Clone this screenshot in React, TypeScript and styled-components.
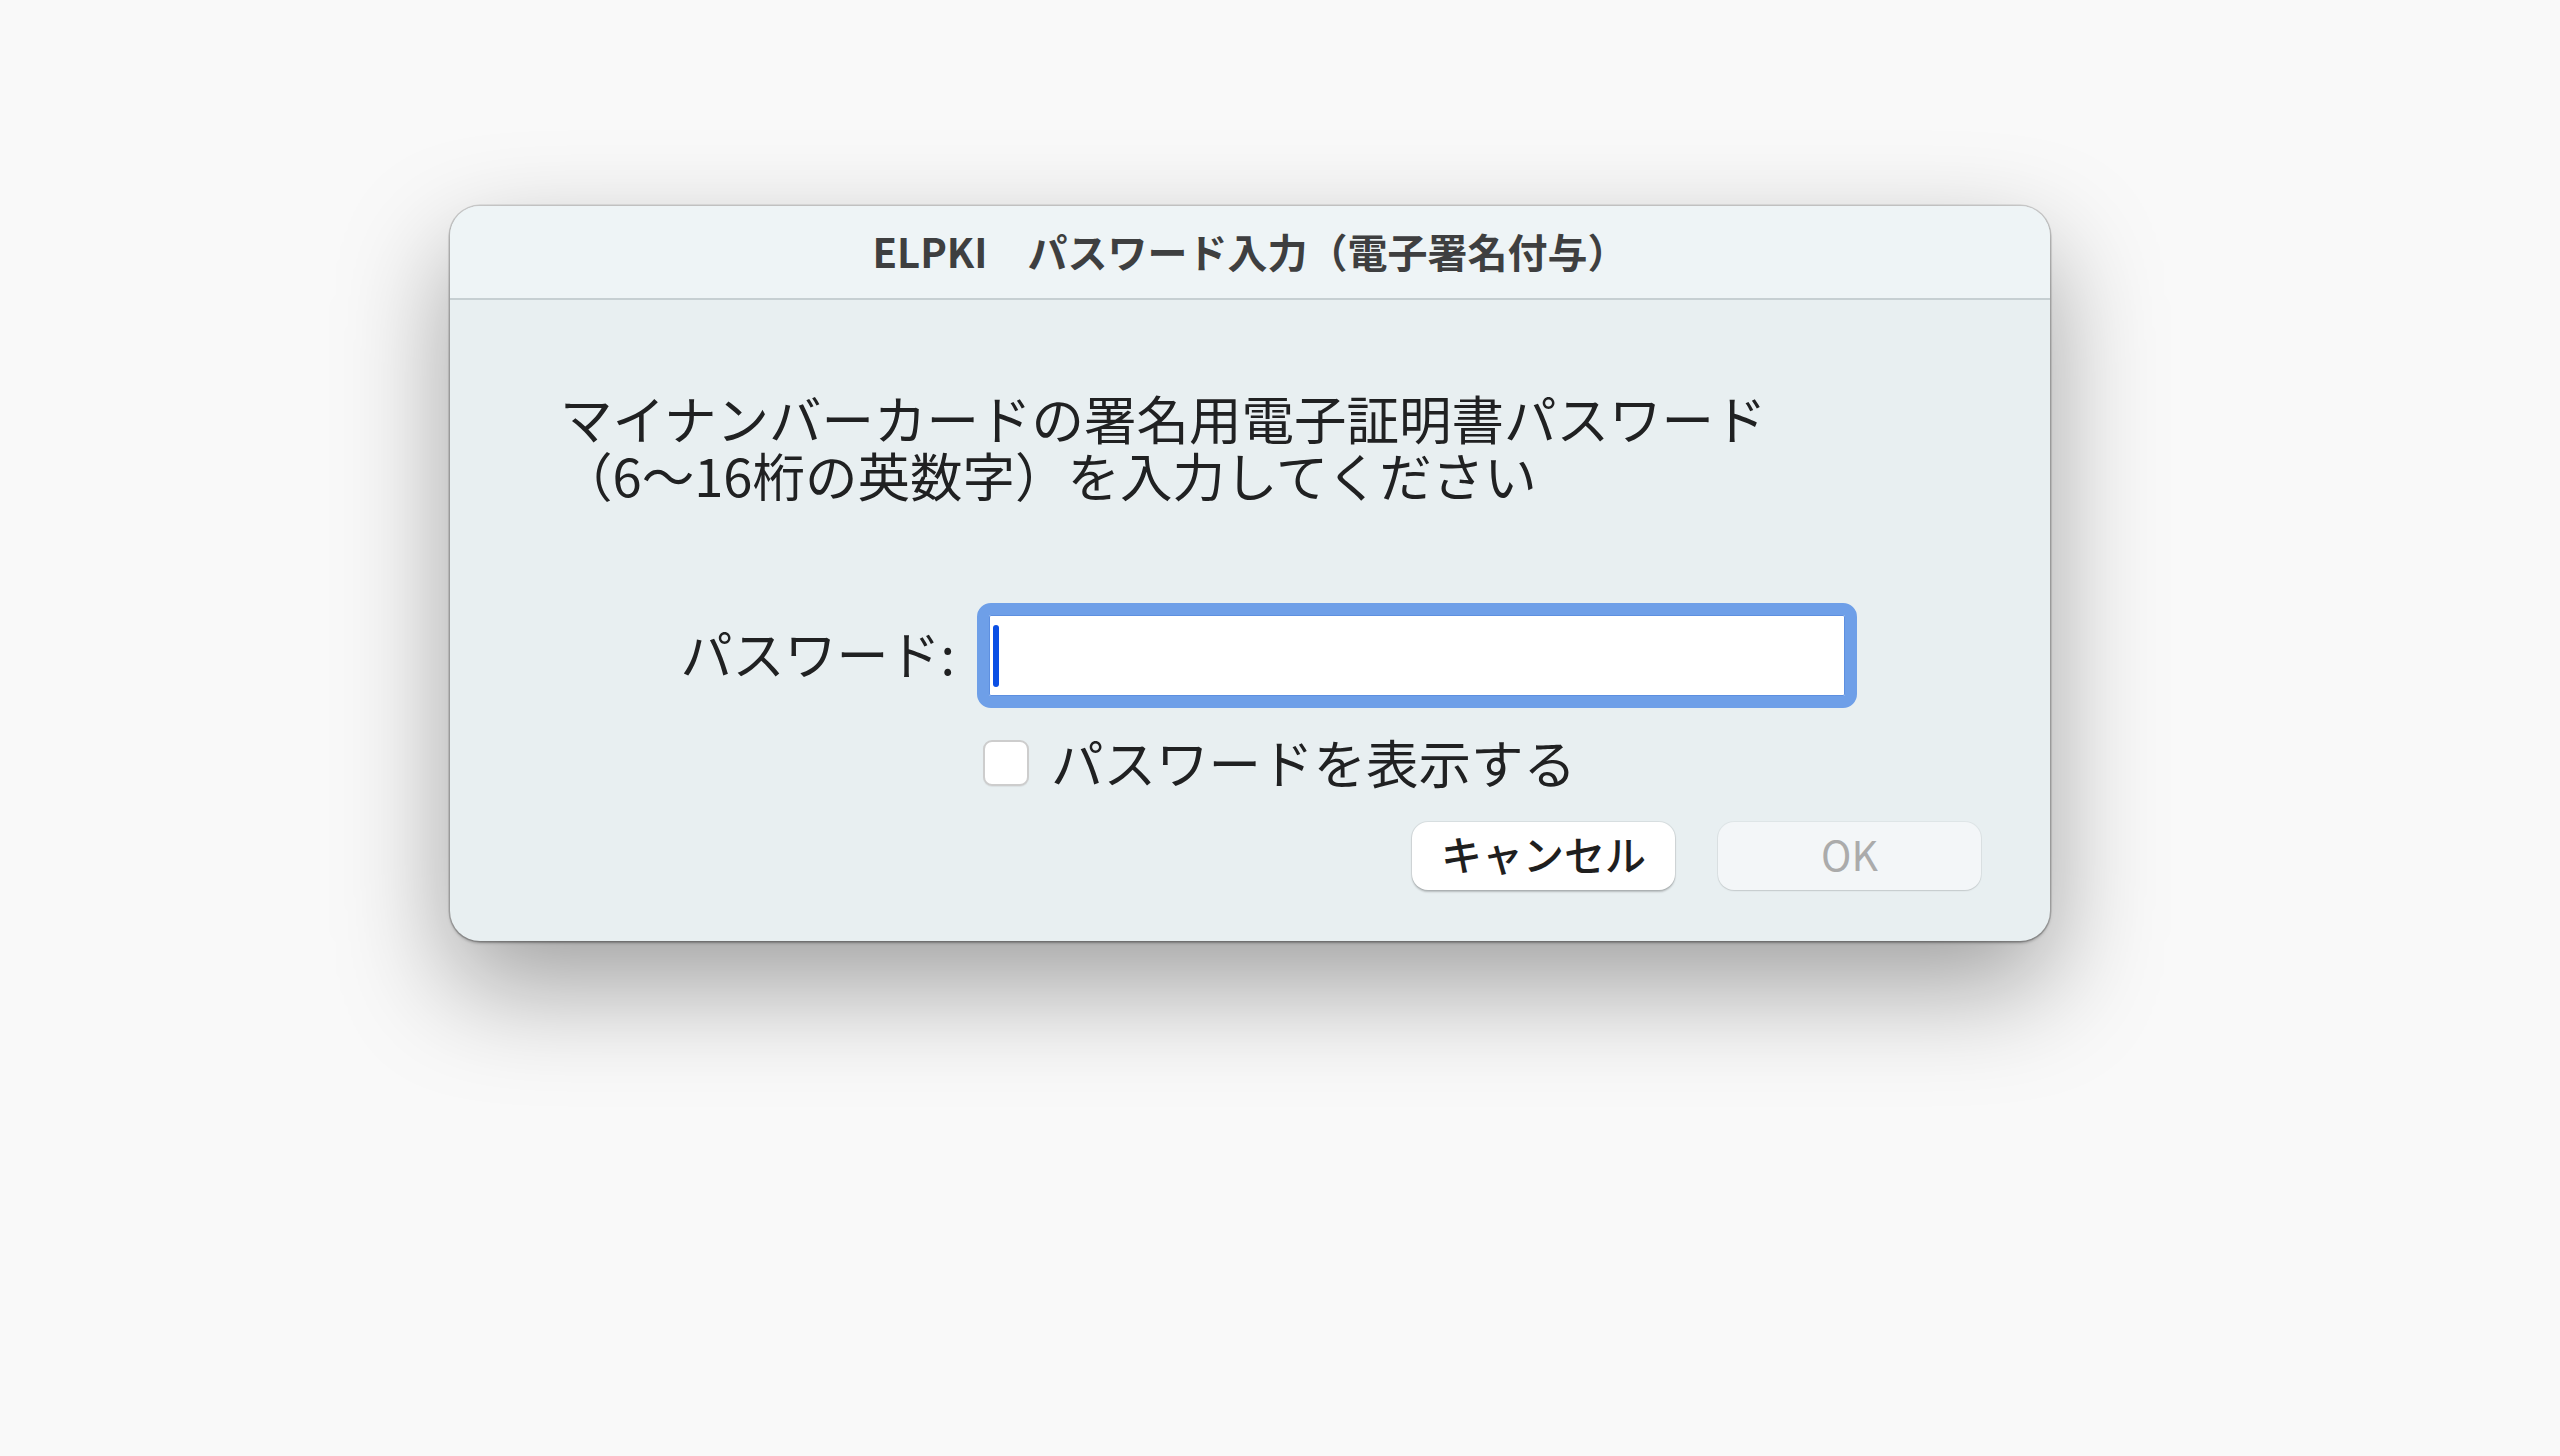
import React from "react";
import styled, { createGlobalStyle } from "styled-components";

const GlobalStyle = createGlobalStyle`
  html, body {
    margin: 0;
    padding: 0;
    background: #f9f9f9;
  }
  body {
    font-family: "Noto Sans CJK JP", "Noto Sans", sans-serif;
    -webkit-font-smoothing: antialiased;
  }
  * { box-sizing: border-box; }
`;

const Page = styled.div`
  width: 2560px;
  height: 1456px;
  padding: 206px 0 0 450px;
  overflow: hidden;
`;

const Dialog = styled.div`
  width: 1600px;
  height: 735px;
  border-radius: 30px;
  overflow: hidden;
  background: #e8eff1;
  display: flex;
  flex-direction: column;
  box-shadow:
    0 0 0 1.5px rgba(0, 0, 0, 0.16),
    0 2px 3px rgba(0, 0, 0, 0.28),
    0 45px 110px rgba(0, 0, 0, 0.36);
`;

const TitleBar = styled.div`
  height: 94px;
  flex: none;
  background: #eef4f6;
  border-bottom: 2px solid #c6cfd2;
  display: flex;
  align-items: center;
  justify-content: center;
  padding-bottom: 2px;
  font-size: 40px;
  font-weight: 700;
  color: #3e3f40;
`;

const Body = styled.div`
  flex: 1;
  display: flex;
  flex-direction: column;
  padding: 89px 69px 50px 0;
`;

const Message = styled.p`
  margin: 0 0 0 110px;
  font-size: 52.5px;
  line-height: 57px;
  color: #202122;
  white-space: nowrap;
`;

const FormGrid = styled.div`
  margin-top: 100px;
  display: grid;
  grid-template-columns: 527px 880px;
  align-items: center;
`;

const Label = styled.label`
  justify-self: end;
  padding-right: 22px;
  padding-bottom: 6px;
  font-size: 52px;
  line-height: 60px;
  color: #202122;
  white-space: nowrap;
`;

const Field = styled.div`
  height: 105px;
  border: 12px solid #6e9fe8;
  border-radius: 14px;
  background: #ffffff;
  display: flex;
  align-items: center;
  padding-left: 4px;
  box-shadow: inset 0 0 0 1px #5d8fe0;
`;

const Caret = styled.span`
  display: block;
  width: 6px;
  height: 62px;
  border-radius: 3px;
  background: #0b4fe4;
`;

const CheckRow = styled.div`
  grid-column: 2;
  margin-top: 32px;
  padding-left: 6px;
  display: flex;
  align-items: center;
  gap: 22px;
  height: 46px;
`;

const Checkbox = styled.span`
  width: 46px;
  height: 46px;
  flex: none;
  border-radius: 9px;
  background: #ffffff;
  border: 2px solid #cdcdcd;
  box-shadow: 0 1px 1px rgba(0, 0, 0, 0.06);
`;

const CheckLabel = styled.span`
  font-size: 52.5px;
  line-height: 60px;
  padding-bottom: 5px;
  color: #202122;
  white-space: nowrap;
`;

const ButtonRow = styled.div`
  margin-top: 36px;
  display: flex;
  justify-content: flex-end;
  gap: 43px;
`;

const Button = styled.button<{ $disabled?: boolean }>`
  width: 263px;
  height: 68px;
  border: none;
  border-radius: 16px;
  font-family: "Noto Sans CJK JP", "Noto Sans", sans-serif;
  font-size: 41px;
  font-weight: ${(p) => (p.$disabled ? 400 : 500)};
  line-height: 1;
  padding: 0 0 5px;
  display: flex;
  align-items: center;
  justify-content: center;
  color: ${(p) => (p.$disabled ? "#ababab" : "#1f1f1f")};
  background: ${(p) => (p.$disabled ? "#f3f6f8" : "#ffffff")};
  box-shadow: ${(p) =>
    p.$disabled
      ? "0 0 0 1px rgba(0,0,0,0.04), 0 1px 1.5px rgba(0,0,0,0.12)"
      : "0 0 0 1px rgba(0,0,0,0.06), 0 1.5px 2px rgba(0,0,0,0.22)"};
`;

export default function App() {
  return (
    <>
      <GlobalStyle />
      <Page>
        <Dialog>
          <TitleBar>ELPKI　パスワード入力（電子署名付与）</TitleBar>
          <Body>
            <Message>
              マイナンバーカードの署名用電子証明書パスワード
              <br />
              （6〜16桁の英数字）を入力してください
            </Message>
            <FormGrid>
              <Label>パスワード:</Label>
              <Field>
                <Caret />
              </Field>
              <CheckRow>
                <Checkbox />
                <CheckLabel>パスワードを表示する</CheckLabel>
              </CheckRow>
            </FormGrid>
            <ButtonRow>
              <Button>キャンセル</Button>
              <Button $disabled>OK</Button>
            </ButtonRow>
          </Body>
        </Dialog>
      </Page>
    </>
  );
}
